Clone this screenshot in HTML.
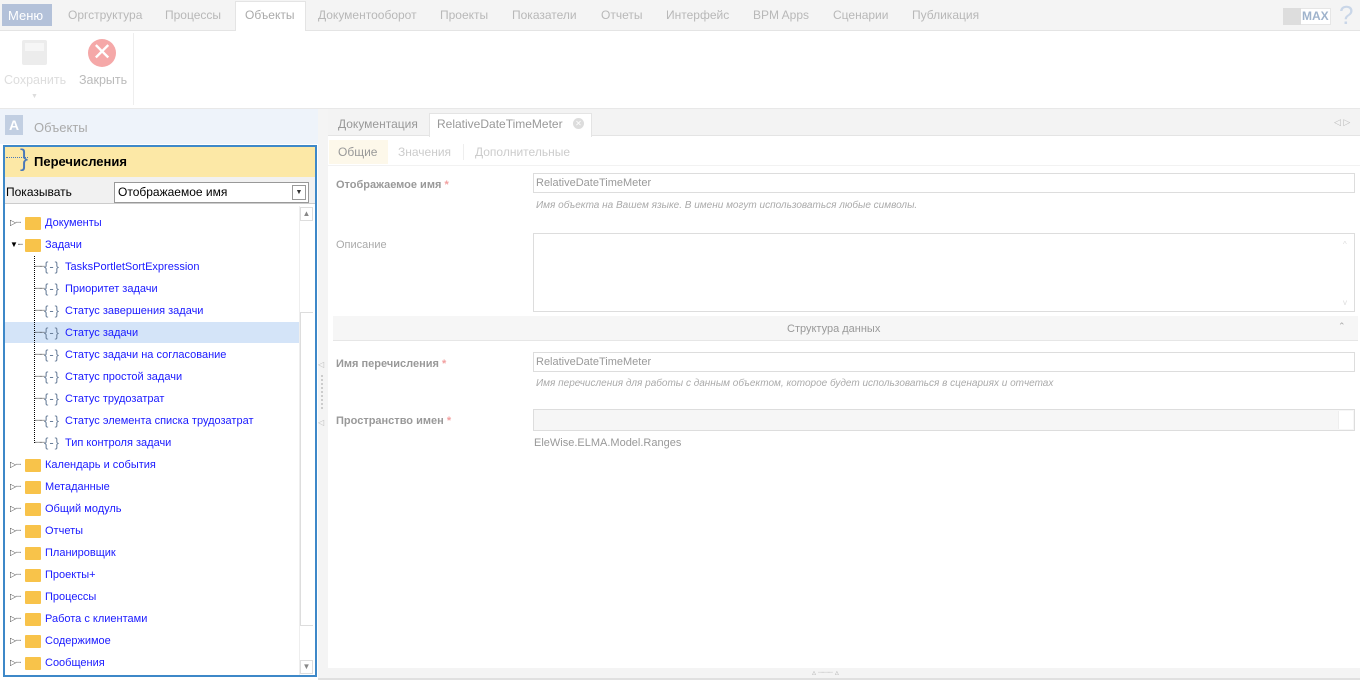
<!DOCTYPE html>
<html><head><meta charset="utf-8"><style>
*{margin:0;padding:0;box-sizing:border-box}
body{width:1360px;height:680px;position:relative;overflow:hidden;background:#fff;font-family:"Liberation Sans",sans-serif;font-size:12px;color:#333}
.a{position:absolute}
.nav{left:0;top:0;width:1360px;height:31px;background:#f4f4f4;border-bottom:1px solid #e4e4e4}
.nav span{position:absolute;top:8px;color:#b8b8b8;font-size:12px}
.tree .r{position:absolute;left:0;height:22px;width:296px;font-size:11px;color:#1a1aff;line-height:22px;white-space:nowrap}
.fold{position:absolute;width:16px;height:13px;background:#f8c34a;border-radius:1px;top:5px}
.br{position:absolute;top:3px;color:#6a7f9a;font-size:13px;line-height:16px;letter-spacing:1px}
.lbl{position:absolute;font-size:11px;font-weight:bold;color:#999}
.lbl b{color:#f2a0a0}
.inp{position:absolute;border:1px solid #ddd;background:#fff;font-size:11px;color:#aaa;padding:3px 2px}
.hint{position:absolute;font-size:10px;font-style:italic;color:#aaa}
</style></head><body>
<div class="a nav">
<div class="a" style="left:2px;top:4px;width:50px;height:22px;background:#b3c1d9"></div>
<span style="left:8px;color:#fff;font-size:13px">Меню</span>
<span style="left:68px">Оргструктура</span>
<span style="left:165px">Процессы</span>
<div class="a" style="left:235px;top:1px;width:71px;height:30px;background:#fff;border:1px solid #e4e4e4;border-bottom:none"></div>
<span style="left:245px;color:#aaa">Объекты</span>
<span style="left:318px">Документооборот</span>
<span style="left:440px">Проекты</span>
<span style="left:512px">Показатели</span>
<span style="left:601px">Отчеты</span>
<span style="left:666px">Интерфейс</span>
<span style="left:753px">BPM Apps</span>
<span style="left:833px">Сценарии</span>
<span style="left:912px">Публикация</span>
<div class="a" style="left:1283px;top:8px;width:48px;height:17px;background:#fff;border:1px solid #e6e6e6"></div>
<div class="a" style="left:1283px;top:8px;width:18px;height:17px;background:#ddd"></div>
<span style="left:1302px;top:9px;font-weight:bold;color:#9fb3cc;font-size:12px">MAX</span>
<span style="left:1339px;top:0;font-size:26px;color:#c9d6e8">?</span>
</div>
<!-- toolbar -->
<div class="a" style="left:22px;top:40px;width:25px;height:25px;background:#ececec;border-radius:2px"></div>
<div class="a" style="left:25px;top:43px;width:19px;height:8px;background:#f6f6f6"></div>
<div class="a" style="left:88px;top:39px;width:28px;height:28px;border-radius:50%;background:#f5a8a8;color:#fff;font-size:24px;line-height:27px;text-align:center">✕</div>
<div class="a" style="left:4px;top:73px;font-size:12.5px;color:#ddd">Сохранить</div>
<div class="a" style="left:79px;top:73px;font-size:12.5px;color:#bbb">Закрыть</div>
<div class="a" style="left:31px;top:93px;font-size:7px;color:#ddd">▼</div>
<div class="a" style="left:133px;top:33px;width:1px;height:72px;background:#eee"></div>
<div class="a" style="left:0;top:108px;width:1360px;height:1px;background:#e8e8e8"></div>
<!-- left header -->
<div class="a" style="left:0;top:109px;width:318px;height:35px;background:#eef3fa"></div>
<div class="a" style="left:5px;top:115px;width:18px;height:20px;background:#c2cfe2;color:#fff;font-size:14px;font-weight:bold;text-align:center;line-height:20px">A</div>
<div class="a" style="left:34px;top:120px;font-size:13px;color:#aaa">Объекты</div>
<!-- blue box -->
<div class="a" style="left:3px;top:145px;width:314px;height:532px;border:2px solid #3e88c8;background:#fff"></div>
<div class="a" style="left:5px;top:147px;width:310px;height:30px;background:#fce8a6"></div>
<div class="a" style="left:6px;top:157px;width:22px;border-top:1px dotted #4a78b8"></div>
<div class="a" style="left:20px;top:145px;font-size:24px;color:#4a78b8">}</div>
<div class="a" style="left:34px;top:154px;font-size:13px;font-weight:bold;color:#000">Перечисления</div>
<div class="a" style="left:5px;top:177px;width:310px;height:27px;background:#f1f1f1;border-bottom:1px solid #ccc"></div>
<div class="a" style="left:6px;top:185px;font-size:12px;color:#000">Показывать</div>
<div class="a" style="left:114px;top:182px;width:195px;height:21px;border:1px solid #999;background:#fff;font-size:12px;color:#000;padding:2px 3px">Отображаемое имя</div>
<div class="a" style="left:292px;top:185px;width:14px;height:15px;border:1px solid #999;font-size:7px;text-align:center;line-height:14px">▼</div>
<!-- scrollbar -->
<div class="a" style="left:299px;top:206px;width:15px;height:469px;background:#fff;border-left:1px solid #eee"></div>
<div class="a" style="left:300px;top:207px;width:13px;height:14px;border:1px solid #ddd;font-size:8px;color:#888;text-align:center;line-height:12px">▲</div>
<div class="a" style="left:300px;top:312px;width:13px;height:314px;border:1px solid #ddd;border-right:none"></div>
<div class="a" style="left:300px;top:660px;width:13px;height:14px;border:1px solid #ddd;font-size:8px;color:#888;text-align:center;line-height:12px">▼</div>
<div class="a" style="left:5px;top:322px;width:294px;height:21px;background:#d4e4f8"></div>
<div class="a" style="left:34px;top:256px;height:187px;border-left:1px dotted #000"></div>
<div class="a tree" style="left:0;top:212px;width:300px;height:462px">
<div class="r" style="top:0"><span style="position:absolute;left:10px;font-size:8px;color:#333">▷┈</span><div class="fold" style="left:25px"></div><span style="position:absolute;left:45px">Документы</span></div>
<div class="r" style="top:22px"><span style="position:absolute;left:10px;font-size:8px;color:#000">▼┈</span><div class="fold" style="left:25px"></div><span style="position:absolute;left:45px">Задачи</span></div>
<div class="r" style="top:44px"><span style="position:absolute;left:35px;color:#000;font-size:8px">┈┈</span><span class="br" style="left:44px">{-}</span><span style="position:absolute;left:65px">TasksPortletSortExpression</span></div>
<div class="r" style="top:66px"><span style="position:absolute;left:35px;color:#000;font-size:8px">┈┈</span><span class="br" style="left:44px">{-}</span><span style="position:absolute;left:65px">Приоритет задачи</span></div>
<div class="r" style="top:88px"><span style="position:absolute;left:35px;color:#000;font-size:8px">┈┈</span><span class="br" style="left:44px">{-}</span><span style="position:absolute;left:65px">Статус завершения задачи</span></div>
<div class="r" style="top:110px"><span style="position:absolute;left:35px;color:#000;font-size:8px">┈┈</span><span class="br" style="left:44px">{-}</span><span style="position:absolute;left:65px">Статус задачи</span></div>
<div class="r" style="top:132px"><span style="position:absolute;left:35px;color:#000;font-size:8px">┈┈</span><span class="br" style="left:44px">{-}</span><span style="position:absolute;left:65px">Статус задачи на согласование</span></div>
<div class="r" style="top:154px"><span style="position:absolute;left:35px;color:#000;font-size:8px">┈┈</span><span class="br" style="left:44px">{-}</span><span style="position:absolute;left:65px">Статус простой задачи</span></div>
<div class="r" style="top:176px"><span style="position:absolute;left:35px;color:#000;font-size:8px">┈┈</span><span class="br" style="left:44px">{-}</span><span style="position:absolute;left:65px">Статус трудозатрат</span></div>
<div class="r" style="top:198px"><span style="position:absolute;left:35px;color:#000;font-size:8px">┈┈</span><span class="br" style="left:44px">{-}</span><span style="position:absolute;left:65px">Статус элемента списка трудозатрат</span></div>
<div class="r" style="top:220px"><span style="position:absolute;left:35px;color:#000;font-size:8px">┈┈</span><span class="br" style="left:44px">{-}</span><span style="position:absolute;left:65px">Тип контроля задачи</span></div>
<div class="r" style="top:242px"><span style="position:absolute;left:10px;font-size:8px;color:#333">▷┈</span><div class="fold" style="left:25px"></div><span style="position:absolute;left:45px">Календарь и события</span></div>
<div class="r" style="top:264px"><span style="position:absolute;left:10px;font-size:8px;color:#333">▷┈</span><div class="fold" style="left:25px"></div><span style="position:absolute;left:45px">Метаданные</span></div>
<div class="r" style="top:286px"><span style="position:absolute;left:10px;font-size:8px;color:#333">▷┈</span><div class="fold" style="left:25px"></div><span style="position:absolute;left:45px">Общий модуль</span></div>
<div class="r" style="top:308px"><span style="position:absolute;left:10px;font-size:8px;color:#333">▷┈</span><div class="fold" style="left:25px"></div><span style="position:absolute;left:45px">Отчеты</span></div>
<div class="r" style="top:330px"><span style="position:absolute;left:10px;font-size:8px;color:#333">▷┈</span><div class="fold" style="left:25px"></div><span style="position:absolute;left:45px">Планировщик</span></div>
<div class="r" style="top:352px"><span style="position:absolute;left:10px;font-size:8px;color:#333">▷┈</span><div class="fold" style="left:25px"></div><span style="position:absolute;left:45px">Проекты+</span></div>
<div class="r" style="top:374px"><span style="position:absolute;left:10px;font-size:8px;color:#333">▷┈</span><div class="fold" style="left:25px"></div><span style="position:absolute;left:45px">Процессы</span></div>
<div class="r" style="top:396px"><span style="position:absolute;left:10px;font-size:8px;color:#333">▷┈</span><div class="fold" style="left:25px"></div><span style="position:absolute;left:45px">Работа с клиентами</span></div>
<div class="r" style="top:418px"><span style="position:absolute;left:10px;font-size:8px;color:#333">▷┈</span><div class="fold" style="left:25px"></div><span style="position:absolute;left:45px">Содержимое</span></div>
<div class="r" style="top:440px"><span style="position:absolute;left:10px;font-size:8px;color:#333">▷┈</span><div class="fold" style="left:25px"></div><span style="position:absolute;left:45px">Сообщения</span></div>
</div>
<!-- splitter -->
<div class="a" style="left:318px;top:109px;width:10px;height:571px;background:#f4f4f4"></div>
<div class="a" style="left:318px;top:360px;font-size:8px;color:#bbb">◁</div>
<div class="a" style="left:321px;top:375px;height:34px;border-left:2px dotted #ccc"></div>
<div class="a" style="left:318px;top:418px;font-size:8px;color:#bbb">◁</div>
<!-- right tabs -->
<div class="a" style="left:328px;top:109px;width:1032px;height:27px;background:#f3f3f3;border-bottom:1px solid #e4e4e4"></div>
<div class="a" style="left:338px;top:117px;font-size:12px;color:#999">Документация</div>
<div class="a" style="left:429px;top:113px;width:163px;height:24px;background:#fff;border:1px solid #e4e4e4;border-bottom:none"></div>
<div class="a" style="left:437px;top:117px;font-size:12px;color:#999">RelativeDateTimeMeter</div>
<div class="a" style="left:573px;top:118px;width:11px;height:11px;border-radius:50%;background:#ddd;color:#fff;font-size:8px;line-height:11px;text-align:center">✕</div>
<div class="a" style="left:1334px;top:117px;font-size:9px;color:#bbb">◁ ▷</div>
<div class="a" style="left:328px;top:137px;width:1032px;height:531px;background:#fff"></div>
<div class="a" style="left:329px;top:140px;width:59px;height:24px;background:#fdf8ea"></div>
<div class="a" style="left:338px;top:145px;font-size:12px;color:#999">Общие</div>
<div class="a" style="left:398px;top:145px;font-size:12px;color:#ccc">Значения</div>
<div class="a" style="left:463px;top:144px;width:1px;height:16px;background:#eee"></div>
<div class="a" style="left:475px;top:145px;font-size:12px;color:#ccc">Дополнительные</div>
<div class="a" style="left:328px;top:165px;width:1032px;height:1px;background:#f2f2f2"></div>
<div class="lbl" style="left:336px;top:179px">Отображаемое имя <b>*</b></div>
<div class="inp" style="left:533px;top:173px;width:822px;height:20px;color:#999">RelativeDateTimeMeter</div>
<div class="hint" style="left:536px;top:200px">Имя объекта на Вашем языке. В имени могут использоваться любые символы.</div>
<div class="a" style="left:336px;top:239px;font-size:11px;color:#aaa">Описание</div>
<div class="inp" style="left:533px;top:233px;width:822px;height:79px"></div>
<div class="a" style="left:1343px;top:240px;font-size:8px;color:#ddd">^</div>
<div class="a" style="left:1343px;top:298px;font-size:8px;color:#ddd">v</div>
<div class="a" style="left:333px;top:316px;width:1025px;height:25px;background:#f6f6f6;border-bottom:1px solid #e6e6e6"></div>
<div class="a" style="left:787px;top:323px;font-size:11px;color:#999">Структура данных</div>
<div class="a" style="left:1338px;top:321px;font-size:9px;color:#aaa">⌃</div>
<div class="lbl" style="left:336px;top:358px">Имя перечисления <b>*</b></div>
<div class="inp" style="left:533px;top:352px;width:822px;height:20px;color:#999">RelativeDateTimeMeter</div>
<div class="hint" style="left:536px;top:378px">Имя перечисления для работы с данным объектом, которое будет использоваться в сценариях и отчетах</div>
<div class="lbl" style="left:336px;top:415px">Пространство имен <b>*</b></div>
<div class="inp" style="left:533px;top:409px;width:822px;height:22px;background:#f6f6f6"></div>
<div class="a" style="left:1338px;top:411px;width:15px;height:18px;border-left:1px solid #eee;background:#fff"></div>
<div class="a" style="left:534px;top:437px;font-size:11px;color:#999">EleWise.ELMA.Model.Ranges</div>
<!-- bottom -->
<div class="a" style="left:318px;top:668px;width:1042px;height:12px;background:#f4f4f4;border-bottom:2px solid #e0e0e0"></div>
<div class="a" style="left:812px;top:668px;font-size:8px;color:#bbb">▵ ┈┈┈ ▵</div>
</body></html>
